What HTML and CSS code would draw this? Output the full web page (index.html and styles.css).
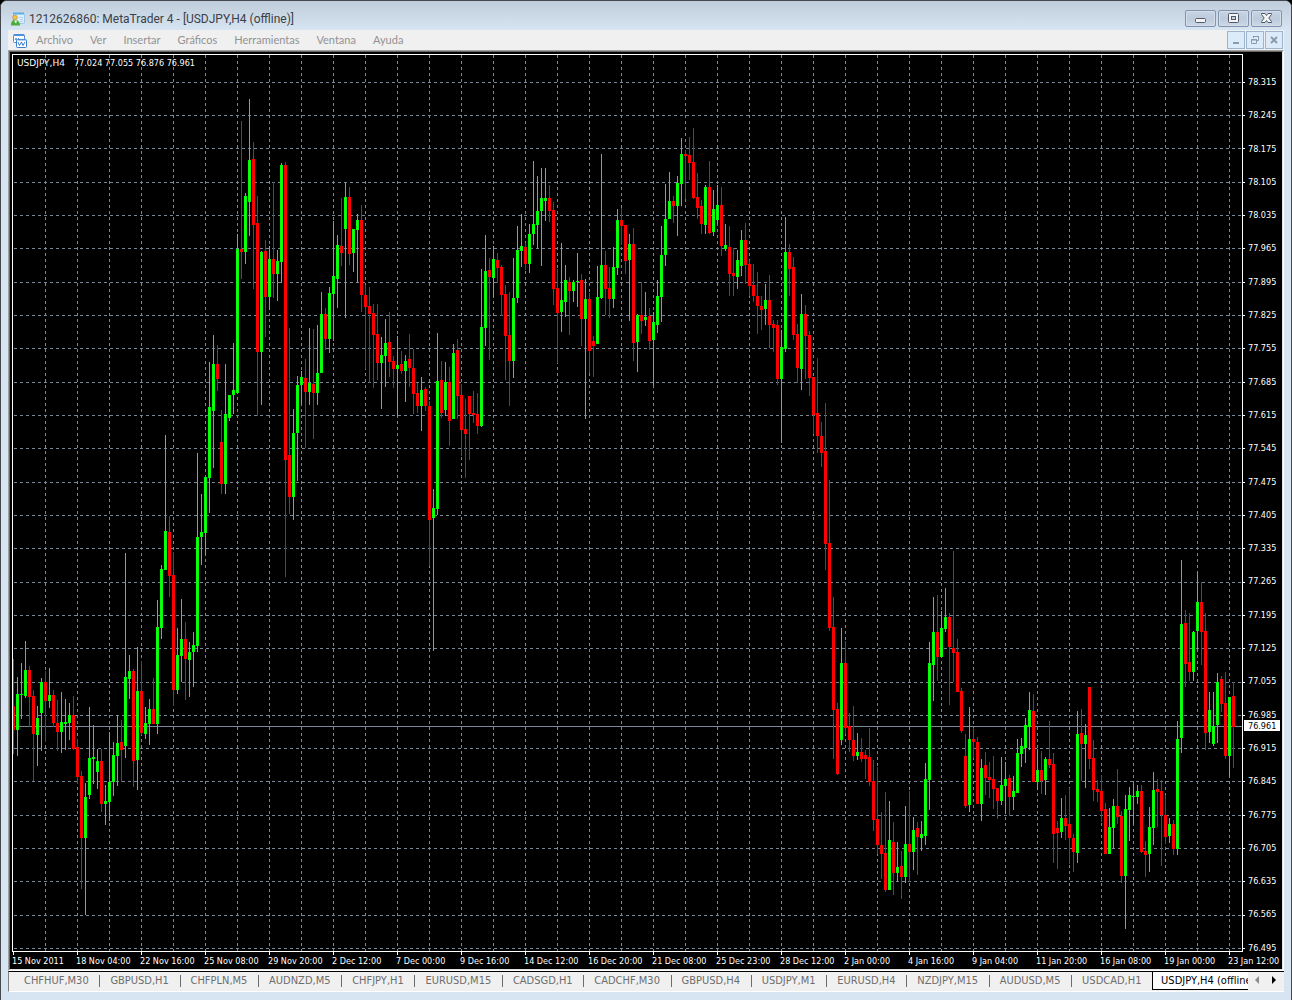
FILE: index.html
```html
<!DOCTYPE html>
<html lang="es">
<head>
<meta charset="utf-8">
<title>1212626860: MetaTrader 4 - [USDJPY,H4 (offline)]</title>
<link rel="stylesheet" href="styles.css">
</head>
<body>
<div class="window">
  <header class="titlebar">
    <svg class="app-icon" viewBox="0 0 14 14" aria-hidden="true">
      <rect x="2.500" y="1.500" width="11" height="10" rx="1" fill="#dceefa" stroke="#9cc6e4"/>
      <path d="M2 1.500h11" stroke="#58aee6" stroke-width="2"/>
      <path d="M8 5.500h4M9 7.500h3M9 9.500h3" stroke="#b3d3ea"/>
      <circle cx="4" cy="5.500" r="2.300" fill="#f0c24a" stroke="#a98530" stroke-width=".6"/>
      <path d="M0 13.500c0-3.500 1-5.500 4-5.500s5 2 5 5.500z" fill="#4cae3c"/>
      <path d="M3 8.500l2 3 1-3z" fill="#fff"/>
    </svg>
    <h1 class="title">1212626860: MetaTrader 4 - [USDJPY,H4 (offline)]</h1>
    <div class="window-buttons">
      <button class="win-btn" type="button" aria-label="Minimizar">
        <svg viewBox="0 0 13 11"><rect x="1.500" y="5.500" width="10" height="4" rx="1" fill="#f4f4f4" stroke="#50586a"/></svg>
      </button>
      <button class="win-btn" type="button" aria-label="Restaurar">
        <svg viewBox="0 0 13 11"><rect x="1.500" y=".5" width="10" height="9" rx="1" fill="#f4f4f4" stroke="#50586a"/><rect x="4.500" y="3.500" width="4" height="3" fill="#c6d3e2" stroke="#50586a"/></svg>
      </button>
      <button class="win-btn" type="button" aria-label="Cerrar">
        <svg viewBox="0 0 13 11"><path d="M1.500 .5h3.500L6.500 2.500 8 .5h3.500v1L8.800 5l2.700 3.500v1H8L6.500 7.500 5 9.500H1.500v-1L4.200 5 1.500 1.500z" fill="#f4f4f4" stroke="#50586a"/></svg>
      </button>
    </div>
  </header>

  <nav class="menubar" aria-label="Menú">
    <svg class="mdi-icon" viewBox="0 0 15 15" aria-hidden="true">
      <rect x="1.500" y="1.500" width="11" height="8" rx="1" fill="#fff" stroke="#4f8fdc"/>
      <path d="M2 2h10" stroke="#4f8fdc" stroke-width="2"/>
      <path d="M3 7l1-2 1 2M6 5l1 1" fill="none" stroke="#4f8fdc"/>
      <rect x="4.500" y="6.500" width="10" height="8" rx="1" fill="#fff" stroke="#3d7dd0"/>
      <path d="M5 7h9" stroke="#6ba3e6" stroke-width="1"/>
      <path d="M6 9l1.500 3.500L9.500 9l1.500 3.500L13 9" fill="none" stroke="#3d7dd0"/>
    </svg>
    <button class="menu-item" type="button">Archivo</button>
    <button class="menu-item" type="button">Ver</button>
    <button class="menu-item" type="button">Insertar</button>
    <button class="menu-item" type="button">Gráficos</button>
    <button class="menu-item" type="button">Herramientas</button>
    <button class="menu-item" type="button">Ventana</button>
    <button class="menu-item" type="button">Ayuda</button>
    <div class="mdi-buttons">
      <button class="mdi-btn" type="button" aria-label="Minimizar gráfico">
        <svg viewBox="0 0 10 10"><path d="M2 8h6" stroke="#8a9bb0" stroke-width="2"/></svg>
      </button>
      <button class="mdi-btn" type="button" aria-label="Restaurar gráfico">
        <svg viewBox="0 0 10 10"><path d="M3.500 3V1.500h5v4H7M3 1.500h6M1.500 4.500h5v4h-5zM1 5h6" fill="none" stroke="#8a9bb0"/></svg>
      </button>
      <button class="mdi-btn" type="button" aria-label="Cerrar gráfico">
        <svg viewBox="0 0 10 10"><path d="M2 2l6 6M8 2l-6 6" stroke="#8a9bb0" stroke-width="2"/></svg>
      </button>
    </div>
  </nav>

  <main class="workspace">
    <section class="chart" aria-label="USDJPY,H4">
      <p class="quote"><span class="symbol">USDJPY,H4</span> <span>77.024 77.055 76.876 76.961</span></p>
      <svg class="plot" id="plot" viewBox="12 54 1232 901" preserveAspectRatio="none" role="img" aria-label="Velas USDJPY H4"></svg>
      <div class="prices">
        <ol class="price-scale" id="prices"></ol>
        <span class="bid">76.961</span>
      </div>
      <ol class="dates" id="dates"></ol>
    </section>
  </main>

  <div class="tabbar">
    <div class="tabs" role="tablist" id="tabs">
      <button class="tab" role="tab" type="button">CHFHUF,M30</button>
      <button class="tab" role="tab" type="button">GBPUSD,H1</button>
      <button class="tab" role="tab" type="button">CHFPLN,M5</button>
      <button class="tab" role="tab" type="button">AUDNZD,M5</button>
      <button class="tab" role="tab" type="button">CHFJPY,H1</button>
      <button class="tab" role="tab" type="button">EURUSD,M15</button>
      <button class="tab" role="tab" type="button">CADSGD,H1</button>
      <button class="tab" role="tab" type="button">CADCHF,M30</button>
      <button class="tab" role="tab" type="button">GBPUSD,H4</button>
      <button class="tab" role="tab" type="button">USDJPY,M1</button>
      <button class="tab" role="tab" type="button">EURUSD,H4</button>
      <button class="tab" role="tab" type="button">NZDJPY,M15</button>
      <button class="tab" role="tab" type="button">AUDUSD,M5</button>
      <button class="tab" role="tab" type="button">USDCAD,H1</button>
      <button class="tab tab-active" role="tab" type="button" aria-selected="true">USDJPY,H4 (offline)</button>
    </div>
    <button class="scroll-btn" type="button" aria-label="Anterior"><svg viewBox="0 0 4 8"><path d="M4 0v8L0 4z" fill="#8a8a8a"/></svg></button>
    <button class="scroll-btn" type="button" aria-label="Siguiente"><svg viewBox="0 0 4 8"><path d="M0 0v8l4-4z" fill="#000"/></svg></button>
  </div>
</div>
<script src="chart.js"></script>
</body>
</html>
```

FILE: styles.css
```css
* { box-sizing: border-box; }

html { background: #000; }

body {
  margin: 0;
  font-family: "DejaVu Sans Condensed", "DejaVu Sans", sans-serif;
}

button {
  margin: 0;
  padding: 0;
  border: 0;
  background: none;
  font: inherit;
  color: inherit;
}

ol { margin: 0; padding: 0; list-style: none; }

.window {
  display: flex;
  flex-direction: column;
  min-height: 100vh;
  padding: 0 7px 8px;
  border: 1px solid #45484e;
  border-radius: 7px 7px 0 0;
  background: #d7e4f2;
}

/* Title bar */
.titlebar {
  display: flex;
  align-items: center;
  height: 29px;
  margin: 0 -7px;
  padding: 6px 9px 0 10px;
  border-radius: 6px 6px 0 0;
  background: linear-gradient(#bfcddb, #d7e4f2);
}

.app-icon { width: 14px; height: 14px; }

.title {
  flex: 1;
  margin: 0 0 0 4px;
  font: 400 12px/16px Roboto, sans-serif;
  color: #3a3f48;
  white-space: nowrap;
}

.window-buttons { display: flex; gap: 2px; }

.win-btn {
  display: flex;
  align-items: center;
  justify-content: center;
  width: 31px;
  height: 17px;
  border: 1px solid #8492ae;
  border-radius: 2px;
  background: linear-gradient(#c8d5e4, #bccadb 50%, #c9d7e6);
  box-shadow: inset 0 0 0 1px #d3deea;
}

.win-btn svg { width: 13px; height: 11px; }

/* Menu */
.menubar {
  display: flex;
  align-items: center;
  height: 20px;
  padding: 0 1px 0 4px;
  background: #f0f0f0;
  font: 11px/16px Lato, sans-serif;
  color: #929292;
}

.mdi-icon { width: 15px; height: 15px; margin-right: 9px; }

.menu-item { margin-right: 17px; }

.mdi-buttons { display: flex; gap: 1px; margin-left: auto; }

.mdi-btn {
  display: flex;
  align-items: center;
  justify-content: center;
  width: 18px;
  height: 18px;
  border: 1px solid #9fb5cb;
  background: #dcebf9;
}

.mdi-btn svg { width: 10px; height: 10px; }

/* Chart */
.workspace {
  display: flex;
  flex: 1;
  border: 1px solid #a0a0a0;
  border-right-color: #fff;
  border-bottom-color: #fff;
}

.chart {
  position: relative;
  display: grid;
  flex: 1;
  grid-template-columns: 1fr 38px;
  grid-template-rows: 1fr 14px;
  padding: 2px 0 0 2px;
  border: 1px solid #696969;
  border-right-color: #e3e3e3;
  border-bottom-color: #e3e3e3;
  background: #000;
  color: #fff;
  font-size: 9px;
  line-height: 12px;
}

.quote {
  position: absolute;
  top: 5px;
  left: 7px;
  display: flex;
  gap: 9px;
  margin: 0;
}

.symbol { font-family: "DejaVu Sans", sans-serif; }

.plot {
  width: 100%;
  height: 100%;
  min-height: 0;
  overflow: visible;
  shape-rendering: crispEdges;
}

.grid-line { fill: none; stroke: #778899; stroke-dasharray: 3 3; }
.bid-line { stroke: #778899; }
.frame { fill: none; stroke: #fff; }
.bear { fill: #f00; }
.bull { fill: #0f0; }
.bull-core { fill: #40ff00; }

.prices { position: relative; display: grid; }

.price-scale {
  display: flex;
  flex-direction: column;
  justify-content: space-between;
  padding: 22px 0 1px 4px;
}

.bid {
  position: absolute;
  top: 73.9%;
  left: 0;
  width: 36px;
  height: 11px;
  padding-left: 4px;
  background: #fff;
  color: #000;
  line-height: 12px;
}

.dates {
  grid-column: 1 / -1;
  display: grid;
  grid-template-columns: repeat(19, 1fr) 54px;
  white-space: nowrap;
}

/* Chart tabs */
.tabbar {
  display: flex;
  height: 21px;
  padding: 0 2px 1px 0;
  border-top: 1px solid #000;
  border-bottom: 1px solid #fff;
  border-left: 1px solid #808080;
  background: #f0f0f0;
  font-size: 11px;
  line-height: 16px;
  color: #6d6d6d;
}

.tabs {
  display: flex;
  flex: 1;
  padding-left: 4px;
  overflow: hidden;
}

.tab {
  position: relative;
  flex: 1 0 auto;
  padding: 0 9px 0 11px;
  text-align: left;
  white-space: nowrap;
}

.tab::after {
  content: "";
  position: absolute;
  top: 3px;
  right: -1px;
  width: 1px;
  height: 12px;
  background: #6d6d6d;
}

.tab-active {
  flex: none;
  width: 96px;
  padding: 0 0 0 8px;
  border: 1px solid #000;
  border-top: 0;
  border-right: 0;
  background: #fff;
  color: #000;
  overflow: hidden;
}

.tab-active::after,
.tab:nth-last-child(2)::after { display: none; }

.scroll-btn { width: 17px; }
.scroll-btn svg { width: 4px; height: 8px; }
```

FILE: chart.js
```js
const NS = "http://www.w3.org/2000/svg";
const plot = document.getElementById("plot");

// One candle per entry: direction, then high, body top, body bottom, low.
const candles = `
r659,706,730,754 g677,694,730,756 g663,694,695,719 g641,670,696,698 r666,670,697,727 r690,696,734,781
g706,718,735,766 g678,682,713,751 r671,682,701,742 g668,695,701,708 r690,695,723,727 r700,723,732,751
g692,722,732,753 g699,722,724,750 g703,715,723,740 r696,715,749,750 r739,747,777,784 r771,776,838,889
g783,797,838,915 g707,758,795,799 g725,757,759,784 g749,761,772,789 r749,761,804,812 g785,801,804,825
g732,782,802,821 g742,755,782,796 g715,743,756,786 r720,742,750,782 g553,677,746,758 g655,671,679,699
r669,671,761,787 g647,691,760,790 r661,691,733,735 g707,723,734,739 g699,709,724,745 r678,709,724,724
g600,627,724,734 g565,569,628,639 g435,531,570,570 r516,532,576,597 r552,575,690,706 g628,655,690,694
g599,639,656,682 r622,639,659,700 g642,652,660,697 g632,645,652,687 g453,537,646,652 g494,532,537,565
g477,477,533,555 g362,407,478,513 g335,364,411,468 r345,364,379,391 r410,442,484,494 g364,414,484,494
g395,395,418,421 g343,390,395,414 g234,249,393,394 r121,249,252,279 g193,196,252,264 g99,160,202,236
r142,159,225,289 r196,223,352,416 g251,252,352,405 r240,251,297,337 g246,259,297,310 r182,259,274,298
g250,261,274,301 g163,165,262,283 r162,165,460,577 r328,455,497,514 g409,433,497,520 g376,385,433,481
g371,377,385,404 r359,378,392,448 g328,383,392,405 r329,384,393,439 g325,373,393,405 g292,314,373,373
r308,314,339,350 g287,293,339,353 g221,276,294,341 g235,245,279,308 r198,246,253,266 g182,197,229,318
r187,197,254,265 g229,229,253,272 g214,220,230,283 r205,220,295,312 r285,295,307,369 r287,306,314,383
r304,313,335,388 r304,334,363,380 g337,355,363,409 g319,343,356,387 r312,342,362,377 r356,361,369,388
g336,365,369,416 r351,364,371,374 g355,361,371,402 r334,359,368,387 r349,368,394,414 r383,393,406,413
g377,390,406,431 r387,389,406,411 r401,406,520,566 g489,508,518,651 g333,381,509,515 r361,380,413,418
g362,382,410,416 r367,382,421,446 g344,353,419,419 r339,350,396,419 r384,395,430,456 r399,429,434,478
r396,396,414,460 r391,413,415,423 r393,414,426,434 g269,327,426,427 g235,271,328,346 r258,270,277,360
g246,259,278,297 r253,260,268,283 r265,267,295,316 r285,294,336,380 r292,335,361,406 g258,298,361,378
g226,250,298,303 g214,246,251,267 r243,247,264,270 g224,234,264,273 g161,224,234,245 g176,211,225,248
g168,198,211,266 g168,198,201,221 r185,198,211,222 r202,210,289,305 r269,288,313,363 g243,300,312,332
g265,280,302,317 r277,282,291,335 g280,282,291,302 g253,281,282,307 r274,280,319,346 g279,299,319,419
r293,299,351,373 r336,341,346,377 g266,297,344,344 g154,265,298,299 r251,265,289,315 r267,288,299,318
g247,267,299,308 g209,220,268,275 r208,220,226,245 r225,225,261,274 g234,244,260,321 r228,244,343,361
g314,315,342,372 r282,315,321,334 g292,317,320,326 r308,316,341,350 g312,322,340,385 g280,296,325,333
g226,255,297,322 g184,219,255,266 g172,201,219,219 r196,201,206,223 g176,183,206,236 g138,154,184,206
r150,154,156,199 r137,155,163,180 r128,162,198,199 r173,197,208,219 r200,206,224,234 g185,187,225,234
r161,187,233,234 g190,209,232,236 g185,205,220,224 r187,205,246,256 g224,245,249,251 r226,247,274,296
r248,273,276,296 g250,260,277,289 g230,240,266,276 r223,240,265,284 r260,264,286,296 r264,285,296,302
r272,296,306,334 r296,306,310,330 g284,300,309,325 r275,300,325,348 r320,324,328,352 r320,325,379,385
g330,347,379,443 g217,252,349,352 r244,252,269,296 r257,267,335,340 r324,334,368,383 g294,314,369,390
r305,314,336,379 r331,335,378,396 r377,377,415,434 r358,413,436,453 r422,436,453,467 r403,451,544,570
r480,543,628,631 r597,627,710,759 r703,709,774,775 g628,663,740,745 r641,663,728,734 r713,726,740,752
r706,740,756,761 g733,752,756,760 r738,752,759,762 r750,755,759,779 r728,757,782,786 r760,781,820,831
r767,819,845,854 r812,845,854,879 r792,853,890,892 g801,840,890,890 r822,842,873,895 g842,867,873,882
r851,866,877,899 g806,844,877,883 r791,844,852,882 g817,830,852,870 r822,828,837,875 g821,834,838,851
g763,779,836,845 g642,663,780,810 g597,632,665,701 r595,632,657,681 g611,628,657,657 g588,617,629,632
r613,617,647,705 r551,648,653,682 r639,652,692,692 r688,691,731,733 r734,756,806,808 g707,739,805,812
r728,739,742,758 r737,742,804,804 g759,768,804,821 r752,765,778,795 r762,777,780,798 r756,779,789,809
r788,788,801,819 g757,785,801,805 g762,779,786,814 r775,778,797,816 g776,791,797,810 g739,753,793,793
g738,746,754,767 g718,725,748,763 g692,710,727,750 r694,711,782,782 g749,770,782,790 r751,770,781,794
g757,759,780,795 r721,759,765,768 r753,764,834,863 r821,828,833,869 g798,818,832,838 r795,818,826,840
r788,824,838,864 r834,838,852,872 g711,734,853,863 r709,733,744,781 g724,735,744,788 r687,687,759,769
r740,758,790,801 r780,789,792,802 r775,791,811,822 r803,809,854,854 g808,827,854,854 g799,806,828,849
r769,806,817,824 r811,816,876,883 g795,809,876,929 g787,795,810,841 g784,796,797,824 g785,791,797,804
r785,791,852,853 r841,851,855,877 g807,827,854,872 g772,790,828,845 r779,789,792,827 r780,791,815,866
r795,815,837,844 g818,824,836,843 r820,824,849,855 g721,739,849,855 g560,624,738,753 r610,623,664,687
r613,662,672,681 g631,632,672,681 g572,602,631,650 r582,602,632,665 r613,631,733,750 g692,710,732,743
g692,726,744,746 g673,682,725,743 r676,679,704,712 r672,703,756,759 g697,697,756,777 r682,696,727,768
`.trim().split(/\s+/);

const dates = ["15 Nov 2011", "18 Nov 04:00", "22 Nov 16:00", "25 Nov 08:00", "29 Nov 20:00",
  "2 Dec 12:00", "7 Dec 00:00", "9 Dec 16:00", "14 Dec 12:00", "16 Dec 20:00", "21 Dec 08:00",
  "25 Dec 23:00", "28 Dec 12:00", "2 Jan 00:00", "4 Jan 16:00", "9 Jan 04:00", "11 Jan 20:00",
  "16 Jan 08:00", "19 Jan 00:00", "23 Jan 12:00"];

function addPath(className, d) {
  const path = document.createElementNS(NS, "path");
  path.setAttribute("class", className);
  path.setAttribute("d", d);
  plot.appendChild(path);
}

function addLabel(listId, text) {
  const item = document.createElement("li");
  item.textContent = text;
  document.getElementById(listId).appendChild(item);
}

const box = (x, top, width, bottom) => `M${x} ${top}h${width}V${bottom}h${-width}z`;

let grid = "";
let frame = "M12.5 951.5V54.5H1242.5V951.5H12";
for (let x = 45; x < 1242; x += 32) grid += `M${x + 0.5} 55V951`;
for (let k = 0; k < 27; k++) {
  const y = Math.round(81.75 + k * 33.32) + 0.5;
  grid += `M14 ${y}H1242`;
  frame += `M1243 ${y}h2`;
  addLabel("prices", (78.315 - k * 0.07).toFixed(3));
}
dates.forEach((text, k) => {
  frame += `M${13.5 + k * 64} 952v3`;
  addLabel("dates", text);
});

const shapes = { r: "", g: "" };
let cores = "";
candles.forEach((entry, i) => {
  const side = entry[0];
  const [high, top, bottom, low] = entry.slice(1).split(",").map(Number);
  const x = 13 + i * 4;
  shapes[side] += box(x, high, 1, low) + box(x - 1, top, 3, bottom);
  if (side === "g" && bottom - top > 2) cores += box(x, top + 1, 1, bottom - 1);
});

addPath("grid-line", grid);
addPath("bid-line", "M13 726.5H1242");
addPath("bear", shapes.r);
addPath("bull", shapes.g);
addPath("bull-core", cores);
addPath("frame", frame);
```
